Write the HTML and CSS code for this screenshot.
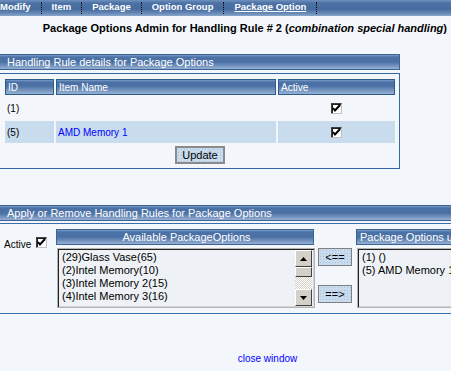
FILE: index.html
```html
<!DOCTYPE html>
<html>
<head>
<meta charset="utf-8">
<link rel="stylesheet" href="styles.css">
</head>
<body>
<div class="page">
  <nav class="nav">
    <a class="nav-item first">Modify</a><span class="sep"></span>
    <a class="nav-item">Item</a><span class="sep"></span>
    <a class="nav-item">Package</a><span class="sep"></span>
    <a class="nav-item">Option Group</a><span class="sep"></span>
    <a class="nav-item current">Package Option</a><span class="sep"></span>
  </nav>

  <div class="title">Package Options Admin for Handling Rule # 2 (<em>combination special handling</em>)</div>

  <section class="sec sec1">
    <div class="bar">Handling Rule details for Package Options</div>
    <div class="box box1">
      <table class="grid">
        <thead>
          <tr><th class="c-id">ID</th><th class="c-name">Item Name</th><th class="c-act">Active</th></tr>
        </thead>
        <tbody>
          <tr><td>(1)</td><td></td><td class="center"><span class="cb"><svg width="9" height="9" viewBox="0 0 9 9"><path d="M1 4 L3 6.5 L8 1" fill="none" stroke="#000" stroke-width="2"/></svg></span></td></tr>
          <tr class="alt"><td>(5)</td><td><a class="link">AMD Memory 1</a></td><td class="center"><span class="cb"><svg width="9" height="9" viewBox="0 0 9 9"><path d="M1 4 L3 6.5 L8 1" fill="none" stroke="#000" stroke-width="2"/></svg></span></td></tr>
        </tbody>
      </table>
      <div class="actions"><button class="btn btn-update">Update</button></div>
    </div>
  </section>

  <section class="sec sec2">
    <div class="bar">Apply or Remove Handling Rules for Package Options</div>
    <div class="box box2">
      <div class="active-group">
        <span class="lbl">Active</span>
        <span class="cb"><svg width="9" height="9" viewBox="0 0 9 9"><path d="M1 4 L3 6.5 L8 1" fill="none" stroke="#000" stroke-width="2"/></svg></span>
      </div>
      <div class="col col-left">
        <div class="bar small center-text">Available PackageOptions</div>
        <div class="listbox">
          <div class="items">
            <div>(29)Glass Vase(65)</div>
            <div>(2)Intel Memory(10)</div>
            <div>(3)Intel Memory 2(15)</div>
            <div>(4)Intel Memory 3(16)</div>
          </div>
          <div class="scroll">
            <div class="sbtn"><svg width="7" height="4" viewBox="0 0 7 4"><path d="M0 4 L3.5 0 L7 4 Z" fill="#000"/></svg></div>
            <div class="thumb"></div>
            <div class="track"></div>
            <div class="sbtn"><svg width="7" height="4" viewBox="0 0 7 4"><path d="M0 0 L3.5 4 L7 0 Z" fill="#000"/></svg></div>
          </div>
        </div>
      </div>
      <div class="movers">
        <button class="btn btn-move">&lt;==</button>
        <button class="btn btn-move">==&gt;</button>
      </div>
      <div class="col col-right">
        <div class="bar small">Package Options used</div>
        <div class="listbox">
          <div class="items">
            <div>(1) ()</div>
            <div>(5) AMD Memory 1(0)</div>
          </div>
        </div>
      </div>
    </div>
  </section>

  <div class="footer"><a class="link">close window</a></div>
</div>
</body>
</html>
```

FILE: styles.css
```css
html, body {
  margin: 0;
  padding: 0;
  overflow: hidden;
  background: #f3f7fb;
}
body {
  font-family: "Liberation Sans", Arial, sans-serif;
  font-size: 11px;
  color: #000;
}
.page {
  width: 535px;
}
.nav {
  height: 16px;
  display: flex;
  align-items: center;
  background: linear-gradient(to bottom, #6f91be 0, #4d73a6 3px, #456b9f 9px, #6386b4 13px, #8aa6cb 16px);
}
.nav-item {
  color: #fff;
  font-weight: bold;
  font-size: 9.5px;
  padding: 0 10px;
  line-height: 14px;
  margin-bottom: 2px;
}
.nav-item.first {
  padding-left: 0;
}
.nav-item.current {
  text-decoration: underline;
}
.sep {
  width: 0;
  height: 12px;
  border-left: 1px dotted #000;
}
.title {
  width: 447px;
  text-align: right;
  font-weight: bold;
  font-size: 11px;
  line-height: 13px;
  margin-top: 6px;
  white-space: nowrap;
}
.title em {
  font-style: italic;
}
.bar {
  height: 14px;
  line-height: 14px;
  border: 1px solid #3b6396;
  border-left: none;
  color: #fff;
  padding-left: 7px;
  white-space: nowrap;
  overflow: hidden;
  background: linear-gradient(to bottom, #7c9cc6 0, #4b72a7 2px, #4a70a4 7px, #6a8bb7 10px, #97b1d3 14px);
}
.bar.small {
  font-size: 11px;
  padding-left: 3px;
  border-left: 1px solid #3b6396;
}
.center-text {
  text-align: center;
}
.sec1 {
  width: 400px;
  margin-top: 19px;
}
.sec2 {
  width: 535px;
  margin-top: 36px;
}
.box {
  border: 1px solid #3468a4;
  border-left: none;
  margin-top: 3px;
}
.box1 {
  padding: 3px 2px 4px 3px;
}
.grid {
  border-spacing: 2px;
  width: 394px;
  font-size: 10px;
}
.grid th {
  height: 14px;
  padding: 0 0 0 2px;
  text-align: left;
  font-weight: normal;
  color: #fff;
  border: 1px solid #2f5a8c;
  background: linear-gradient(to bottom, #7c9cc6 0, #4b72a7 2px, #4a70a4 6px, #6a8bb7 9px, #97b1d3 14px);
}
.c-id { width: 45px; }
.c-act { width: 113px; }
.grid td {
  height: 22px;
  padding: 0 0 0 2px;
}
.grid tr.alt td {
  background: #c8dcee;
}
.grid td.center {
  text-align: center;
  padding: 0;
}
.link {
  color: #0000ff;
  text-decoration: none;
}
.cb {
  display: inline-flex;
  align-items: center;
  justify-content: center;
  width: 9px;
  height: 9px;
  background: #fff;
  border-top: 1px solid #404040;
  border-left: 1px solid #404040;
  border-right: 1px solid #c0c0c0;
  border-bottom: 1px solid #c0c0c0;
  box-shadow: inset 1px 1px 0 #202020;
  vertical-align: middle;
}
.actions {
  text-align: center;
  margin-top: 1px;
}
.btn {
  font-family: "Liberation Sans", Arial, sans-serif;
  font-size: 11px;
  color: #000;
  border: 1px solid #7f7f7f;
  background-color: #c8dcee;
  background-image: radial-gradient(circle, #a9c1dc 0.6px, transparent 0.9px);
  background-size: 3px 3px;
  padding: 0;
  margin: 0;
  cursor: default;
}
.btn-update {
  width: 50px;
  height: 18px;
  border-width: 2px;
  border-color: #8a8a8a;
}
.box2 {
  display: flex;
  align-items: flex-start;
  padding: 5px 0 5px 4px;
  margin-top: 2px;
  border-right: none;
  border-color: #3a6ea8;
}
.box2 > * {
  flex-shrink: 0;
}
.active-group {
  display: flex;
  align-items: flex-end;
  gap: 5px;
  font-size: 10px;
  margin-top: 8px;
  width: 52px;
}
.active-group .lbl {
  line-height: 12px;
}
.active-group .cb {
  margin-bottom: 3px;
}
.col-left {
  width: 258px;
}
.col-right {
  width: 200px;
  margin-left: 4px;
}
.listbox {
  margin: 3px 0 0 1px;
  height: 56px;
  display: flex;
  background: #eef2f6;
  border: 1px solid #b4b4b4;
  box-shadow: inset 1px 1px 0 #202020, inset -1px -1px 0 #d4d4d4;
  padding: 1px;
}
.col-left .listbox {
  width: 254px;
}
.items {
  flex: 1;
  padding: 1px 0 0 3px;
  line-height: 13px;
  font-size: 11px;
  white-space: nowrap;
  overflow: hidden;
}
.scroll {
  width: 17px;
  display: flex;
  flex-direction: column;
  margin-right: 1px;
}
.sbtn {
  height: 15px;
  display: flex;
  align-items: center;
  justify-content: center;
  background: #d4d0c8;
  border-top: 1px solid #fff;
  border-left: 1px solid #fff;
  border-right: 1px solid #404040;
  border-bottom: 1px solid #404040;
}
.thumb {
  height: 8px;
  background: #d4d0c8;
  border-top: 1px solid #fff;
  border-left: 1px solid #fff;
  border-right: 1px solid #404040;
  border-bottom: 1px solid #404040;
}
.track {
  flex: 1;
  background-color: #fff;
  background-image: linear-gradient(45deg, #d4d0c8 25%, transparent 25%, transparent 75%, #d4d0c8 75%), linear-gradient(45deg, #d4d0c8 25%, transparent 25%, transparent 75%, #d4d0c8 75%);
  background-size: 2px 2px;
  background-position: 0 0, 1px 1px;
}
.movers {
  display: flex;
  flex-direction: column;
  gap: 19px;
  margin: 19px 0 0 4px;
}
.btn-move {
  width: 34px;
  height: 18px;
}
.footer {
  text-align: center;
  font-size: 10px;
  margin-top: 39px;
}
```
